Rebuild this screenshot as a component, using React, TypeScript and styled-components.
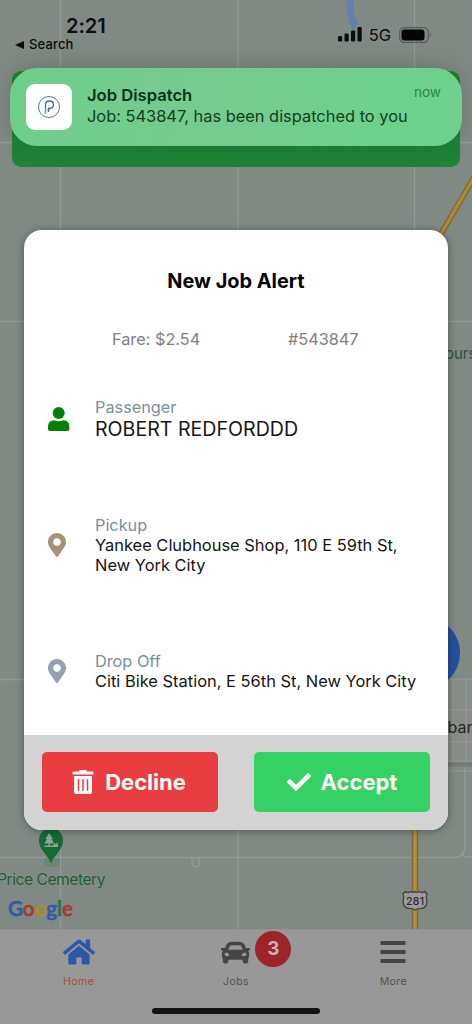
import React from 'react';
import styled, { createGlobalStyle } from 'styled-components';
import { FaCar, FaCheck, FaHome, FaMapMarkerAlt, FaTrashAlt } from 'react-icons/fa';

const GlobalStyle = createGlobalStyle`
  *, *::before, *::after { box-sizing: border-box; }
  body { margin: 0; font-family: Inter, Roboto, sans-serif; }
`;

const Screen = styled.div`
  position: relative;
  display: flex;
  flex-direction: column;
  width: 472px;
  height: 1024px;
  overflow: hidden;
  background: #7f8882;
`;

const MapArea = styled.div`
  flex: 0 0 929px;
  svg { display: block; }
  text { font-family: Inter, Roboto, sans-serif; }
`;

const TabBar = styled.nav`
  display: flex;
  flex: 1;
  background: #989898;
  border-top: 1px solid #919292;
`;

const Tab = styled.div<{ $color: string }>`
  display: flex;
  flex: 1;
  flex-direction: column;
  align-items: center;
  padding-top: 7px;
  color: ${p => p.$color};
  font-size: 10.7px;
  line-height: 14px;
  letter-spacing: 0.3px;
`;

const TabIcon = styled.div<{ $color: string }>`
  position: relative;
  display: flex;
  align-items: center;
  justify-content: center;
  height: 30px;
  margin-bottom: 8px;
  color: ${p => p.$color};
`;

const Badge = styled.span`
  position: absolute;
  left: 34px;
  top: -6px;
  width: 36px;
  height: 36px;
  border-radius: 50%;
  background: #9f2429;
  color: #c4b4b4;
  font-size: 19px;
  font-weight: 700;
  line-height: 36px;
  letter-spacing: 0;
  text-align: center;
`;

const Layer = styled.div`
  position: absolute;
  inset: 0;
  display: flex;
  flex-direction: column;
`;

const StatusBar = styled.header`
  display: flex;
  justify-content: space-between;
  flex: 0 0 68px;
  padding: 15px 40px 0 15px;
  color: #0b0c0c;
`;

const Clock = styled.div`
  padding-left: 51px;
  font-size: 20px;
  font-weight: 600;
  line-height: 23px;
  letter-spacing: -0.05px;
`;

const BackLink = styled.div`
  display: flex;
  align-items: center;
  gap: 5px;
  font-size: 13px;
  font-weight: 500;
  line-height: 13px;
  letter-spacing: 0.15px;
`;

const Signals = styled.div`
  display: flex;
  align-items: center;
  height: 23px;
  margin-top: 8px;
  font-size: 16.5px;
  font-weight: 400;
`;

const Network = styled.span`
  margin: 1px 8px 0 7px;
`;

const Header = styled.div`
  height: 96px;
  margin: 3px 12px 0;
  border-radius: 9px;
  background: #1f8338;
`;

const Banner = styled.section`
  display: flex;
  align-items: center;
  width: 452px;
  height: 78px;
  margin: -99px 10px 0;
  padding: 0 21px 0 16px;
  border-radius: 27px;
  background: linear-gradient(100deg, #6ccf89 0%, #77ca90 45%, #6ed18b 80%);
  box-shadow: 0 -2px 24px rgba(0, 0, 0, 0.16);
  color: #123e1d;
`;

const AppIcon = styled.div`
  width: 46px;
  height: 46px;
  border-radius: 9px;
  background: #fff;
`;

const Message = styled.div`
  flex: 1;
  margin: -2px 0 0 15px;
  font-size: 16.4px;
  line-height: 21px;
  white-space: nowrap;
`;

const MessageTitle = styled.div`
  font-size: 16.6px;
  font-weight: 600;
  color: #0b3315;
`;

const When = styled.span`
  align-self: flex-start;
  margin-top: 15px;
  font-size: 13.6px;
  line-height: 18px;
  color: #288745;
`;

const Dialog = styled.main`
  display: flex;
  flex-direction: column;
  width: 424px;
  height: 600px;
  margin: 84px 24px 0;
  border-radius: 18px;
  overflow: hidden;
  background: #fff;
  box-shadow: 0 1px 8px rgba(0, 0, 0, 0.36);
`;

const Title = styled.h1`
  margin: 38px 0 0;
  font-size: 19.9px;
  font-weight: 700;
  line-height: 26px;
  text-align: center;
  color: #050505;
`;

const Summary = styled.div`
  display: flex;
  height: 22px;
  margin: 34px 0 47px;
  padding-left: 88px;
  font-size: 16.3px;
  line-height: 22px;
  color: #808080;
`;

const Fare = styled.span`
  width: 176px;
`;

const Row = styled.div<{ $height: number }>`
  display: flex;
  height: ${p => p.$height}px;
  padding-left: 24px;
`;

const RowIcon = styled.div<{ $color: string; $top: number }>`
  width: 47px;
  padding-top: ${p => p.$top}px;
  color: ${p => p.$color};
  svg { display: block; }
`;

const Pin = styled(FaMapMarkerAlt)`
  width: 18px;
  height: 24px;
`;

const Label = styled.div`
  font-size: 16.3px;
  line-height: 20px;
  color: #78909c;
`;

const Value = styled.div<{ $size: number; $line: number }>`
  font-size: ${p => p.$size}px;
  line-height: ${p => p.$line}px;
  color: #151515;
  white-space: pre-line;
`;

const Footer = styled.footer`
  display: flex;
  align-items: flex-start;
  justify-content: space-between;
  height: 95px;
  margin-top: auto;
  padding: 17px 18px 0;
  background: #d3d3d3;
`;

const Button = styled.button<{ $color: string; $shift?: number }>`
  display: flex;
  width: 176px;
  align-items: center;
  justify-content: center;
  gap: 10px;
  height: 60px;
  padding: 0 ${p => p.$shift ?? 0}px 0 0;
  border: 0;
  border-radius: 5px;
  background: ${p => p.$color};
  color: #fffafa;
  font: 700 22px/28px Inter, Roboto, sans-serif;
`;

const HomeIndicator = styled.div`
  position: absolute;
  left: 152px;
  bottom: 10px;
  width: 168px;
  height: 6px;
  border-radius: 3px;
  background: #131313;
`;

const AreaMap = () => (
  <svg width="472" height="929" viewBox="0 0 472 929">
    <rect width="472" height="929" fill="#808983" />
    <g stroke="#939a95" strokeWidth="1.3" fill="none">
      <path d="M60.5 0V929M238 0V929M414.500 0V240M0 142.500H472M0 321.500H472M0 679.500H30" />
      <path d="M0 857.500H455Q465 857 465 845V680M472 857H467Q462 856 462 852" />
      <path d="M192 858V861Q192 867 196 867T199 861V858" />
    </g>
    <path d="M440 679H472V765H440Z" fill="#868c88" />
    <path d="M440 679H472M440 710H472M440 725H472M440 742H472M440 761H472M453 679V765M466 679V765M448 771H472" stroke="#959a96" strokeWidth="1.1" />
    <path d="M440 764.500H472" stroke="#737b77" strokeWidth="4" />
    <path d="M345 0H354V15L356 17V20L359 23L355 27L354 30H351L352 26L347 22L350 19L346 13L349 11L345 6L348 4Z" fill="#657fb2" />
    <path d="M476 174L438 239" stroke="#876a2e" strokeWidth="6" />
    <path d="M476 174L438 239" stroke="#ad883d" strokeWidth="3" />
    <path d="M415 820V929" stroke="#82692f" strokeWidth="6.500" />
    <path d="M415 820V929" stroke="#ae9045" strokeWidth="3.500" />
    <path d="M405.500 891.500Q408 893.500 410.500 891.500Q413 893 415 891.500Q417 893 419.500 891.500Q422 893.500 424.500 891.500L427 894Q425.500 897 426.800 900Q427.500 907 422 908.500Q418 908 415 910Q412 908 408 908.500Q402.500 907 403.200 900Q404.500 897 403 894Z" fill="#9b9b9b" stroke="#454548" strokeWidth="1.400" />
    <text x="406" y="904.500" fontSize="10.500" fontWeight="500" fill="#29292c" textLength="18">281</text>
    <circle cx="423.600" cy="653" r="36.500" fill="#24509b" />
    <text x="445" y="359" fontSize="15" fill="#2c513b">ours</text>
    <text x="447.500" y="733" fontSize="16" fill="#242827">ban</text>
    <rect x="44" y="858" width="16" height="9" fill="#668875" />
    <path d="M51 828C44 828 39 833.500 39 840.500C39 850 46 852 51 863.500C56 852 63 850 63 840.500C63 833.500 58 828 51 828Z" fill="#176b31" />
    <path d="M49 833L53 839H51.500L54 843.500H50V845.500H53L54.500 843L56 844.500L57 842L58 845.500V847H44.500V845.500H48.500V843.500H44.500L47 839H45.500Z" fill="#8ca594" />
    <text x="-3" y="885" fontSize="15.700" fill="#1e5b35" textLength="108.500" stroke="#87918a" strokeWidth="1.500" paintOrder="stroke">Price Cemetery</text>
    <text x="8" y="915.500" fontSize="20.500" fontWeight="600" textLength="65" lengthAdjust="spacingAndGlyphs" strokeWidth=".6" style={{ fontFamily: 'Lato, sans-serif' }}>
      <tspan fill="#315ba5" stroke="#315ba5">G</tspan><tspan fill="#a53c34" stroke="#a53c34">o</tspan><tspan fill="#b18b20" stroke="#b18b20">o</tspan><tspan fill="#315ba5" stroke="#315ba5">g</tspan><tspan fill="#2a7540" stroke="#2a7540">l</tspan><tspan fill="#a53c34" stroke="#a53c34">e</tspan>
    </text>
  </svg>
);

const SignalIcon = () => (
  <svg width="24" height="15" viewBox="0 0 24 15" fill="currentColor">
    <rect x="0" y="9" width="4.200" height="5.500" rx="1.200" />
    <rect x="6.500" y="6.500" width="4.200" height="8" rx="1.200" />
    <rect x="13" y="3.500" width="4.200" height="11" rx="1.200" />
    <rect x="19.500" y="0" width="4.200" height="14.500" rx="1.200" />
  </svg>
);

const BatteryIcon = () => (
  <svg width="33" height="16" viewBox="0 0 33 16">
    <rect x=".7" y=".7" width="28.600" height="14.600" rx="4.600" fill="none" stroke="#565c58" strokeWidth="1.200" />
    <rect x="2.500" y="2.500" width="23" height="11" rx="3" fill="#050505" />
    <path d="M31 5.500Q33 8 31 10.500Z" fill="#565c58" />
  </svg>
);

const AppLogo = () => (
  <svg width="46" height="46" viewBox="0 0 46 46" fill="none">
    <circle cx="23" cy="23" r="10.500" stroke="#557d92" strokeWidth="1" />
    <path d="M19.500 29V20.500Q19.500 17 23.500 17Q27.500 17 27.500 20.800Q27.500 24.500 23.500 24.500H22.500V28" stroke="#3d6f8e" strokeWidth="1.300" />
    <circle cx="22.500" cy="26" r="1" fill="#3d7594" />
    <path d="M19.500 30V24" stroke="#53afc5" strokeWidth="1.300" />
  </svg>
);

const PersonIcon = () => (
  <svg width="22" height="24" viewBox="0 0 22 24" fill="currentColor">
    <circle cx="10.700" cy="6" r="6" />
    <path d="M0 20Q0 13.300 6 13.300Q8.200 14.300 10.700 14.300T15.400 13.300Q21.400 13.300 21.400 20V22Q21.400 24 19.400 24H2Q0 24 0 22Z" />
  </svg>
);

const MenuIcon = () => (
  <svg width="26" height="24" viewBox="0 0 26 24">
    <path d="M.5 3H25.500M.5 12H25.500M.5 21H25.500" stroke="currentColor" strokeWidth="4" />
  </svg>
);

export default function App() {
  return (
    <>
      <GlobalStyle />
      <Screen>
        <MapArea><AreaMap /></MapArea>
        <TabBar>
          <Tab $color="#a64c3a">
            <TabIcon $color="#2d58a8"><FaHome size={32} /></TabIcon>
            Home
          </Tab>
          <Tab $color="#535353">
            <TabIcon $color="#454545"><FaCar size={29} /><Badge>3</Badge></TabIcon>
            Jobs
          </Tab>
          <Tab $color="#535353">
            <TabIcon $color="#454545"><MenuIcon /></TabIcon>
            More
          </Tab>
        </TabBar>
        <Layer>
          <StatusBar>
            <div>
              <Clock>2:21</Clock>
              <BackLink>
                <svg width="9" height="8" viewBox="0 0 9 8"><path d="M0 4L9 0V8Z" fill="currentColor" /></svg>
                Search
              </BackLink>
            </div>
            <Signals>
              <SignalIcon />
              <Network>5G</Network>
              <BatteryIcon />
            </Signals>
          </StatusBar>
          <Header />
          <Banner>
            <AppIcon><AppLogo /></AppIcon>
            <Message>
              <MessageTitle>Job Dispatch</MessageTitle>
              Job: 543847, has been dispatched to you
            </Message>
            <When>now</When>
          </Banner>
          <Dialog>
            <Title>New Job Alert</Title>
            <Summary>
              <Fare>Fare: $2.54</Fare>
              <span>#543847</span>
            </Summary>
            <Row $height={118}>
              <RowIcon $color="#068006" $top={10}><PersonIcon /></RowIcon>
              <div>
                <Label>Passenger</Label>
                <Value $size={19.6} $line={25}>ROBERT REDFORDDD</Value>
              </div>
            </Row>
            <Row $height={136}>
              <RowIcon $color="#a99172" $top={18}><Pin /></RowIcon>
              <div>
                <Label>Pickup</Label>
                <Value $size={16.45} $line={20}>{'Yankee Clubhouse Shop, 110 E 59th St,\nNew York City'}</Value>
              </div>
            </Row>
            <Row $height={60}>
              <RowIcon $color="#94a1ae" $top={8}><Pin /></RowIcon>
              <div>
                <Label>Drop Off</Label>
                <Value $size={16.45} $line={20}>Citi Bike Station, E 56th St, New York City</Value>
              </div>
            </Row>
            <Footer>
              <Button $color="#e83e41" $shift={3}><FaTrashAlt size={24} />Decline</Button>
              <Button $color="#36d164"><FaCheck size={24} />Accept</Button>
            </Footer>
          </Dialog>
        </Layer>
        <HomeIndicator />
      </Screen>
    </>
  );
}
